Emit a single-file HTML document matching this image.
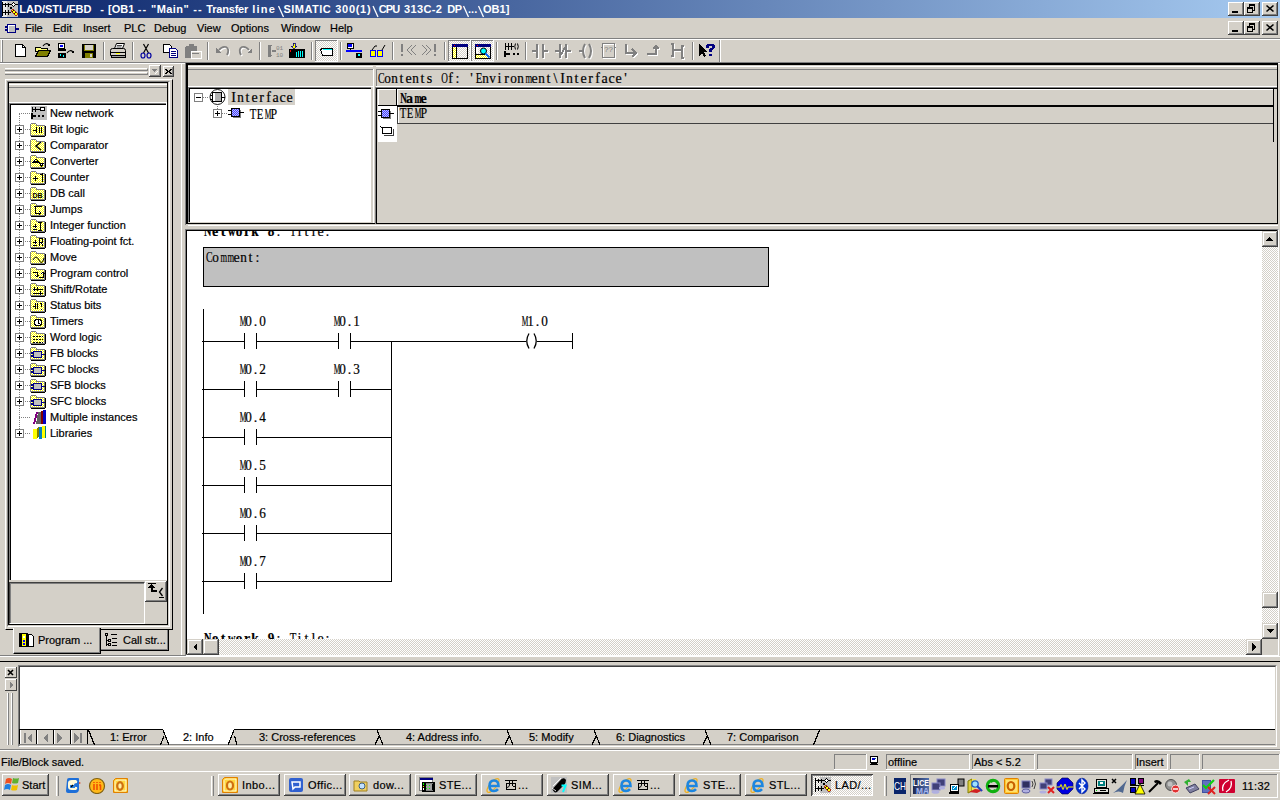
<!DOCTYPE html>
<html><head><meta charset="utf-8">
<style>
*{margin:0;padding:0;box-sizing:border-box}
html,body{width:1280px;height:800px;overflow:hidden;background:#D4D0C8;font-family:"Liberation Sans",sans-serif;font-size:11px;color:#000;-webkit-text-stroke:0.2px #000}
#title{-webkit-text-stroke:0}
.a{position:absolute}
.raised{background:#D4D0C8;box-shadow:inset -1px -1px #404040,inset 1px 1px #D4D0C8,inset -2px -2px #808080,inset 2px 2px #fff}
.sunken{box-shadow:inset -1px -1px #fff,inset 1px 1px #808080,inset -2px -2px #D4D0C8,inset 2px 2px #404040}
.thin{box-shadow:inset -1px -1px #808080,inset 1px 1px #fff}
.thinsunk{box-shadow:inset -1px -1px #fff,inset 1px 1px #808080}
.mono{font-family:"Liberation Serif",serif;font-size:14px}
.mono i{font-style:normal;display:inline-block;width:7px;text-align:center}
.mono b i{width:8px}
.nw{white-space:nowrap}
.sep{position:absolute;top:42px;width:2px;height:18px;border-left:1px solid #808080;border-right:1px solid #fff}
</style></head><body>

<!-- TITLE BAR -->
<div class="a" style="left:0;top:0;width:1280px;height:18px;background:linear-gradient(to right,#0A246A,#A6CAF0)"></div>
<div id="title" class="a nw" style="left:20px;top:2px;color:#fff;font-weight:bold;font-size:11px;line-height:14px;width:500px;height:14px"><span class="a" style="left:-0.7px">LAD/STL/FBD</span><span class="a" style="left:80.3px">-</span><span class="a" style="left:88.05px">[OB1</span><span class="a" style="left:117.7px;letter-spacing:1.2px">--</span><span class="a" style="left:131.0px;letter-spacing:0.45px">&quot;Main&quot;</span><span class="a" style="left:173.2px;letter-spacing:1.2px">--</span><span class="a" style="left:186.3px;letter-spacing:-0.2px">Transfer</span><span class="a" style="left:232.3px;letter-spacing:1.2px">line</span><span class="a" style="left:263.5px;letter-spacing:0.45px">SIMATIC</span><span class="a" style="left:315.3px;letter-spacing:0.7px">300(1)</span><span class="a" style="left:358.7px;letter-spacing:-0.8px">CPU</span><span class="a" style="left:384.05px;letter-spacing:0.35px">313C-2</span><span class="a" style="left:427.3px;letter-spacing:-0.6px">DP</span><span class="a" style="left:448.05px">...</span><span class="a" style="left:463.05px">OB1]</span><svg class="a" style="left:0;top:2px" width="500" height="14"><g stroke="#fff" stroke-width="1.3" fill="none"><path d="M258.5 2L263.5 13" /><path d="M353.0 2L358.0 13" /><path d="M443.5 2L448.5 13" /><path d="M458.5 2L463.5 13" /></g></svg></div>


<!-- title icon -->
<svg class="a" style="left:2px;top:1px" width="16" height="16"><g shape-rendering="crispEdges"><rect x="0" y="0" width="16" height="16" fill="#e8e8e8"/><rect x="5" y="0" width="11" height="16" fill="#c0c0c0"/><path d="M0.5 1v14M3.5 2v4M3.5 9v5M6.5 2v4M6.5 9v5M0.5 3.5h10M0.5 11.5h8" stroke="#000"/><path d="M11.5 1.5l2 2l-2 2l-2-2z" fill="#fff" stroke="#000"/><path d="M13 3.5h3" stroke="#000"/><path d="M7 7l2-1l1 1l-1 2z" fill="#000"/></g><path d="M9 10l2-2l5 5l-2 2z" fill="#ff0" stroke="#a00000" stroke-width="0.8"/><path d="M10 11l2-2M12 13l2-2" stroke="#000" stroke-width="0.9"/></svg>
<!-- title buttons -->
<div class="a" style="left:1228px;top:2px;width:16px;height:14px;background:#D4D0C8;box-shadow:inset -1px -1px #404040,inset 1px 1px #fff,inset -2px -2px #808080"></div>
<div class="a" style="left:1244px;top:2px;width:16px;height:14px;background:#D4D0C8;box-shadow:inset -1px -1px #404040,inset 1px 1px #fff,inset -2px -2px #808080"></div>
<div class="a" style="left:1262px;top:2px;width:16px;height:14px;background:#D4D0C8;box-shadow:inset -1px -1px #404040,inset 1px 1px #fff,inset -2px -2px #808080"></div>
<div class="a" style="left:1228px;top:21px;width:16px;height:14px;background:#D4D0C8;box-shadow:inset -1px -1px #404040,inset 1px 1px #fff,inset -2px -2px #808080"></div>
<div class="a" style="left:1244px;top:21px;width:16px;height:14px;background:#D4D0C8;box-shadow:inset -1px -1px #404040,inset 1px 1px #fff,inset -2px -2px #808080"></div>
<div class="a" style="left:1262px;top:21px;width:16px;height:14px;background:#D4D0C8;box-shadow:inset -1px -1px #404040,inset 1px 1px #fff,inset -2px -2px #808080"></div>
<svg class="a" style="left:1228px;top:2px" width="50" height="33" shape-rendering="crispEdges">
 <g id="wb">
 <rect x="4" y="9" width="6" height="2" fill="#000"/>
 <path d="M21.5 2.5h5v6h-2M21.5 2.5v3" fill="none" stroke="#000"/><rect x="21" y="2" width="6" height="2" fill="#000"/>
 <path d="M19.5 5.5h5v5h-5z" fill="none" stroke="#000"/><rect x="19" y="5" width="6" height="2" fill="#000"/>
 <path d="M38.5 3.5l7 6M45.5 3.5l-7 6" stroke="#000" stroke-width="1.6" shape-rendering="auto"/>
 </g>
 <use href="#wb" y="19"/>
</svg>
<!-- MDI icon -->
<svg class="a" style="left:5px;top:24px" width="15" height="10" shape-rendering="crispEdges">
 <rect x="2" y="0" width="9" height="9" fill="#000080"/><rect x="3" y="1" width="7" height="7" fill="#fff"/><rect x="4" y="2" width="6" height="6" fill="#C0C0C0"/>
 <rect x="0" y="2" width="2" height="2" fill="#000080"/><rect x="0" y="5" width="2" height="2" fill="#000080"/><rect x="11" y="4" width="3" height="2" fill="#000080"/>
</svg>
<!-- MENU BAR -->
<div class="a" style="left:0;top:38px;width:1280px;height:1px;background:#808080"></div>
<div class="a" style="left:0;top:39px;width:1280px;height:1px;background:#fff"></div>
<div id="menu" class="a nw" style="left:0;top:22px;line-height:13px">
<span class="a" style="left:25px">File</span>
<span class="a" style="left:53px">Edit</span>
<span class="a" style="left:83px">Insert</span>
<span class="a" style="left:124px">PLC</span>
<span class="a" style="left:154px">Debug</span>
<span class="a" style="left:197px">View</span>
<span class="a" style="left:231px">Options</span>
<span class="a" style="left:281px">Window</span>
<span class="a" style="left:330px">Help</span>
</div>

<!-- TOOLBAR -->
<div class="a" style="left:0;top:62px;width:1280px;height:1px;background:#808080"></div>
<div class="a" style="left:0;top:63px;width:1280px;height:1px;background:#fff"></div>

<div class="a" style="left:1px;top:40px;width:1px;height:22px;background:#fff"></div>
<div class="a" style="left:2px;top:40px;width:1px;height:22px;background:#808080"></div>
<!-- pressed buttons -->
<div class="a thinsunk" style="left:315px;top:40px;width:23px;height:22px;background-color:#fff;background-image:repeating-conic-gradient(#D4D0C8 0 25%,#fff 0 50%);background-size:2px 2px"></div>
<div class="a thinsunk" style="left:448px;top:40px;width:23px;height:22px;background-color:#fff;background-image:repeating-conic-gradient(#D4D0C8 0 25%,#fff 0 50%);background-size:2px 2px"></div>
<div class="a thinsunk" style="left:471px;top:40px;width:23px;height:22px;background-color:#fff;background-image:repeating-conic-gradient(#D4D0C8 0 25%,#fff 0 50%);background-size:2px 2px"></div>
<div class="sep" style="left:103px"></div>
<div class="sep" style="left:132px"></div>
<div class="sep" style="left:207px"></div>
<div class="sep" style="left:259px"></div>
<div class="sep" style="left:311px"></div>
<div class="sep" style="left:340px"></div>
<div class="sep" style="left:392px"></div>
<div class="sep" style="left:444px"></div>
<div class="sep" style="left:496px"></div>
<div class="sep" style="left:525px"></div>
<div class="sep" style="left:692px"></div>
<div class="a" style="left:719px;top:40px;width:1px;height:22px;background:#808080"></div>
<div class="a" style="left:720px;top:40px;width:1px;height:22px;background:#fff"></div>
<svg class="a" style="left:0;top:38px" width="730" height="26" shape-rendering="crispEdges">
 <!-- new -->
 <path d="M15.5 6.5h7l3 3v9h-10z" fill="#fff" stroke="#000"/><path d="M22.5 6.5v3h3" fill="none" stroke="#000"/>
 <!-- open -->
 <path d="M35.5 9.5h5l1 1h6v3h-12z" fill="#ffff80" stroke="#000"/><path d="M35.5 18.5l3-6h12l-3 6z" fill="#808000" stroke="#000"/>
 <path d="M43 8q3-4 6-1" fill="none" stroke="#000" stroke-width="1.2" shape-rendering="auto"/><path d="M47 8h3v-3z" fill="#000"/>
 <!-- download -->
 <rect x="58.5" y="5.5" width="6" height="5" fill="#fff" stroke="#000"/><rect x="60" y="7" width="3" height="2" fill="#00f"/><rect x="58" y="11" width="8" height="2" fill="#000"/>
 <rect x="58" y="15" width="8" height="5" fill="#000"/><rect x="60" y="16" width="1" height="2" fill="#0ff"/><rect x="63" y="17" width="1" height="2" fill="#0ff"/>
 <path d="M67 15q3-4 6-1" fill="none" stroke="#000" stroke-width="1.2" shape-rendering="auto"/><path d="M71 15h3v-3z" fill="#000"/>
 <!-- save -->
 <rect x="82" y="6" width="14" height="14" fill="#000"/><rect x="84" y="7" width="10" height="6" fill="#808000"/><rect x="85" y="7" width="8" height="5" fill="#D4D0C8"/><rect x="85" y="15" width="8" height="5" fill="#808000"/><rect x="90" y="16" width="2" height="3" fill="#D4D0C8"/>
 <!-- print -->
 <path d="M114.5 10.5l2-5h8l-2 5z" fill="#fff" stroke="#000" shape-rendering="auto"/><path d="M117 7.5h5M116.5 9h5" stroke="#000" stroke-width="0.7" shape-rendering="auto"/><path d="M110.5 12.5q0-2 2-2h11q2 0 2 2v5h-15z" fill="#D4D0C8" stroke="#000" shape-rendering="auto"/><rect x="111" y="14" width="14" height="1" fill="#000"/><rect x="116" y="15" width="4" height="1" fill="#ff0"/><path d="M111.5 17.5h14v2h-14z" fill="#a0a0a0" stroke="#000"/>
 <!-- cut -->
 <path d="M143.5 6l5 9M148.5 6l-5 9" stroke="#000" fill="none" stroke-width="1.2" shape-rendering="auto"/><ellipse cx="143" cy="17.5" rx="2" ry="2.5" fill="none" stroke="#0000a0" stroke-width="1.2" shape-rendering="auto"/><ellipse cx="149" cy="17.5" rx="2" ry="2.5" fill="none" stroke="#0000a0" stroke-width="1.2" shape-rendering="auto"/>
 <!-- copy -->
 <path d="M163.5 6.5h6l2 2v6h-8z" fill="#fff" stroke="#000"/><path d="M169.5 10.5h6l2 2v7h-8z" fill="#fff" stroke="#000080"/><rect x="171" y="13" width="5" height="1" fill="#000080"/><rect x="171" y="15" width="5" height="1" fill="#000080"/><rect x="171" y="17" width="5" height="1" fill="#000080"/>
 <!-- paste disabled -->
 <rect x="185" y="8" width="12" height="12" rx="2" fill="#808080"/><rect x="189" y="6" width="5" height="3" fill="#808080"/><rect x="191" y="13" width="10" height="7" fill="#D4D0C8" stroke="#fff"/><rect x="192" y="15" width="7" height="1" fill="#808080"/>
 <!-- undo/redo disabled -->
 <g transform="translate(1 1)"><path d="M219 12q3-4 7-3q4 2 1 8" fill="none" stroke="#fff" stroke-width="1.8" shape-rendering="auto"/></g><path d="M219 12q3-4 7-3q4 2 1 8" fill="none" stroke="#808080" stroke-width="1.8" shape-rendering="auto"/><path d="M216 10v5h5z" fill="#808080"/>
 <g transform="translate(1 1)"><path d="M249 12q-3-4-7-3q-4 2-1 8" fill="none" stroke="#fff" stroke-width="1.8" shape-rendering="auto"/></g><path d="M249 12q-3-4-7-3q-4 2-1 8" fill="none" stroke="#808080" stroke-width="1.8" shape-rendering="auto"/><path d="M252 10v5h-5z" fill="#808080"/>
 <!-- insert/compare disabled -->
 <path d="M268 7h3v12h-3z" fill="#808080"/><path d="M270 7h2v2M270 17h2v2" fill="#808080"/><rect x="272" y="12" width="4" height="2" fill="#808080"/>
 <text x="276" y="12" font-family="Liberation Mono" font-size="6" fill="#808080">01</text><text x="276" y="19" font-family="Liberation Mono" font-size="6" fill="#808080">10</text>
 <!-- download to PLC -->
 <rect x="289" y="11" width="16" height="9" fill="#000"/><rect x="290" y="12" width="1" height="2" fill="#f00"/><rect x="296" y="14" width="1" height="5" fill="#0ff"/><rect x="298" y="13" width="1" height="6" fill="#0ff"/><rect x="300" y="13" width="1" height="6" fill="#0ff"/><rect x="302" y="13" width="1" height="6" fill="#0ff"/>
 <path d="M293 5h2v3h2l-3 3l-3-3h2z" fill="#ff0" stroke="#000080" stroke-width="0.8"/>
 <!-- tag icon (pressed) -->
 <path d="M320.5 11.5l2 -1h10v7h-10z" fill="#fff" stroke="#000"/><rect x="323" y="11" width="9" height="1" fill="#0ff"/>
 <!-- network -->
 <rect x="347" y="5" width="6" height="5" fill="#fff" stroke="#000"/><rect x="348" y="6" width="4" height="3" fill="#00f"/><rect x="346" y="12" width="16" height="2" fill="#00f"/><rect x="350" y="10" width="1" height="2" fill="#000"/><rect x="356" y="15" width="6" height="5" fill="#000"/><rect x="358" y="16" width="2" height="2" fill="#0ff"/>
 <!-- glasses -->
 <rect x="370.5" y="12.5" width="5" height="6" fill="#ff0" stroke="#00f" rx="1"/><rect x="377.5" y="12.5" width="5" height="6" fill="#ff0" stroke="#00f" rx="1"/><path d="M372 12l3-4h2M382 12l3-5" fill="none" stroke="#000" shape-rendering="auto"/>
 <!-- disabled !<< >>! -->
 <rect x="401" y="6" width="2" height="8" fill="#808080"/><rect x="401" y="16" width="2" height="2" fill="#808080"/>
 <path d="M412 7l-5 5l5 5M416 7l-5 5l5 5" fill="none" stroke="#808080" shape-rendering="auto"/>
 <path d="M422 7l5 5l-5 5M426 7l5 5l-5 5" fill="none" stroke="#808080" shape-rendering="auto"/>
 <rect x="434" y="6" width="2" height="8" fill="#808080"/><rect x="434" y="16" width="2" height="2" fill="#808080"/>
 <!-- window icons pressed -->
 <defs><pattern id="dw" width="2" height="2" patternUnits="userSpaceOnUse"><rect width="2" height="2" fill="#D4D0C8"/><rect width="1" height="1" fill="#fff"/><rect x="1" y="1" width="1" height="1" fill="#fff"/></pattern><pattern id="dy2" width="2" height="2" patternUnits="userSpaceOnUse"><rect width="2" height="2" fill="#ffff00"/><rect width="1" height="1" fill="#fff"/><rect x="1" y="1" width="1" height="1" fill="#fff"/></pattern></defs>
 <rect x="452.5" y="6.5" width="15" height="14" fill="url(#dw)" stroke="#000"/><rect x="452" y="6" width="16" height="3" fill="#000080"/><rect x="454" y="7" width="1" height="1" fill="#f00"/><rect x="453" y="9" width="3" height="11" fill="url(#dy2)"/><rect x="456" y="9" width="1" height="11" fill="#000"/>
 <rect x="475.5" y="6.5" width="15" height="14" fill="url(#dw)" stroke="#000"/><rect x="475" y="6" width="16" height="3" fill="#000080"/><rect x="477" y="7" width="1" height="1" fill="#f00"/><rect x="476" y="9" width="2" height="6" fill="#fff"/><rect x="476" y="17" width="14" height="3" fill="url(#dy2)"/><rect x="476" y="16" width="9" height="1" fill="#000"/><circle cx="483.5" cy="13" r="3" fill="#0ff" stroke="#000" shape-rendering="auto"/><path d="M485.5 15.5l4 4" stroke="#0060ff" stroke-width="1.8" shape-rendering="auto"/>
 <!-- new network -->
 <rect x="505" y="5" width="1" height="7" fill="#000"/><rect x="508" y="5" width="1" height="7" fill="#000"/><rect x="511" y="5" width="1" height="7" fill="#000"/><rect x="505" y="8" width="9" height="1" fill="#000"/><path d="M515.5 5.5q-1.5 3 0 6M517.5 5.5q1.5 3 0 6" stroke="#000" fill="none" shape-rendering="auto"/>
 <rect x="504" y="13" width="2" height="6" fill="#000"/><rect x="504" y="15" width="6" height="2" fill="#000"/><rect x="513" y="15" width="2" height="2" fill="#000"/><rect x="517" y="15" width="2" height="2" fill="#000"/>
 <!-- contact disabled etc -->
 <g transform="translate(1 1)" stroke="#fff" fill="none"><path d="M532 13h5M537 6v14M543 6v14M543 13h5" stroke-width="2"/><path d="M555 13h5M560 6v14M566 6v14M566 13h5M560 18l6-10" stroke-width="2"/><path d="M579 13h4" stroke-width="2"/><path d="M585 6q-4 7 0 14M589 6q4 7 0 14" stroke-width="2" shape-rendering="auto"/><rect x="602.5" y="5.5" width="12" height="14"/></g>
 <g stroke="#808080" fill="none"><path d="M532 13h5M537 6v14M543 6v14M543 13h5" stroke-width="2"/><path d="M555 13h5M560 6v14M566 6v14M566 13h5M560 18l6-10" stroke-width="2"/><path d="M579 13h4" stroke-width="2"/><path d="M585 6q-4 7 0 14M589 6q4 7 0 14" stroke-width="2" shape-rendering="auto"/><rect x="602.5" y="5.5" width="12" height="14"/><path d="M601 9.5h2M614 9.5h2"/></g>
 <text x="604" y="14" font-family="Liberation Sans" font-size="8" fill="#808080">??</text>
 <g transform="translate(1 1)" stroke="#fff" fill="none" stroke-width="2"><path d="M626 6v9h10M632 11l4 4l-4 4"/><path d="M647 16h9v-8M653 11l3-3l3 3"/><path d="M671 6h2v12h-2M673 12h9M684 8h-2v12h2"/></g>
 <g stroke="#808080" fill="none" stroke-width="2"><path d="M626 6v9h10M632 11l4 4l-4 4"/><path d="M647 16h9v-8M653 11l3-3l3 3"/><path d="M671 6h2v12h-2M673 12h9M684 8h-2v12h2"/></g>
 <!-- help -->
 <path d="M699 6v12l3-3l2 4l2-1l-2-4h4z" fill="#000"/><path d="M706 10v-2.5l2-1.5h5l2 1.5v2.5l-2 1.5h-1v2h-3v-2.5l1.5-1.5h1.5v-1.5h-3v1.5z" fill="#000080"/><rect x="709" y="16" width="3" height="2" fill="#000080"/>
</svg>

<!-- LEFT PANEL -->
<!-- dock grip -->
<div class="a" style="left:5px;top:68px;width:143px;height:3px;border-top:1px solid #fff;border-bottom:1px solid #808080;border-right:1px solid #808080"></div>
<div class="a" style="left:5px;top:72px;width:143px;height:3px;border-top:1px solid #fff;border-bottom:1px solid #808080;border-right:1px solid #808080"></div>
<div class="a raised" style="left:149px;top:65px;width:12px;height:12px;box-shadow:inset -1px -1px #404040,inset 1px 1px #fff,inset -2px -2px #808080"></div>
<svg class="a" style="left:149px;top:65px" width="12" height="12" shape-rendering="crispEdges"><path d="M3 4h5v1h-1v1h-1v1h-1v-1h-1v-1h-1z" fill="#808080"/><path d="M6 8h1v-1h1v-1h1v1h-1v1h-1v1h-1z" fill="#fff"/></svg>
<div class="a raised" style="left:163px;top:66px;width:11px;height:11px;box-shadow:inset -1px -1px #404040,inset 1px 1px #fff,inset -2px -2px #808080"></div>
<svg class="a" style="left:163px;top:66px" width="11" height="11" shape-rendering="crispEdges"><path d="M2 3h2v1h1v1h1v-1h1v-1h2v1h-1v1h-1v1h1v1h1v1h-2v-1h-1v-1h-1v1h-1v1h-2v-1h1v-1h1v-1h-1v-1h-1z" fill="#000"/></svg>
<!-- frame -->
<div class="a" style="left:5px;top:79px;width:168px;height:551px;border-left:1px solid #fff;border-top:1px solid #fff;border-right:1px solid #000;border-bottom:1px solid #000"></div>
<div class="a" style="left:7px;top:81px;width:163px;height:546px;border-left:1px solid #808080;border-top:1px solid #808080;border-right:1px solid #fff;border-bottom:1px solid #fff"></div>
<div class="a" style="left:8px;top:82px;width:160px;height:543px;border:1px solid #000"></div>
<!-- header -->
<div class="a" style="left:9px;top:84px;width:158px;height:4px;border-top:1px solid #fff;border-bottom:1px solid #808080"></div>
<div class="a" style="left:9px;top:102px;width:158px;height:1px;background:#fff"></div>
<!-- tree -->
<div class="a" style="left:9px;top:103px;width:158px;height:477px;background:#fff;border-left:1px solid #808080;border-top:1px solid #808080;box-shadow:inset 1px 1px #000"></div>
<div class="a" style="left:166px;top:103px;width:1px;height:477px;background:#fff"></div>
<svg class="a" style="left:0;top:0" width="170" height="450" shape-rendering="crispEdges">
<defs><pattern id="dy" width="2" height="2" patternUnits="userSpaceOnUse"><rect width="2" height="2" fill="#ffff00"/><rect width="1" height="1" fill="#fff"/><rect x="1" y="1" width="1" height="1" fill="#fff"/></pattern></defs>
<path d="M19 114v320" stroke="#808080" stroke-dasharray="1 1"/>
<path d="M19 113h11" stroke="#808080" stroke-dasharray="1 1"/>
<rect x="31" y="106" width="16" height="14" fill="#C0C0C0"/><path d="M32 107v5M35 107v5M32 109h10" stroke="#000"/><rect x="40.5" y="107.5" width="4" height="3" fill="#fff" stroke="#000"/><rect x="31" y="113" width="2" height="6" fill="#000"/><rect x="31" y="115" width="5" height="2" fill="#000"/><rect x="38" y="115" width="2" height="2" fill="#000"/><rect x="42" y="115" width="2" height="2" fill="#000"/>
<path d="M25 129h5" stroke="#808080" stroke-dasharray="1 1"/>
<rect x="15.5" y="125.5" width="8" height="8" fill="#fff" stroke="#808080"/><path d="M17 129.5h5M19.5 127v5" stroke="#000"/>
<g transform="translate(30 121)"><path d="M0.5 14.5v-10l1-2.5h4l1.5 2.5h7v10z" fill="url(#dy)" stroke="#808080"/><path d="M1 15h14M15 5v10" stroke="#000"/><path d="M3 9h3M6 6v6M9 6v6M11 6v6" stroke="#000"/></g>
<path d="M25 145h5" stroke="#808080" stroke-dasharray="1 1"/>
<rect x="15.5" y="141.5" width="8" height="8" fill="#fff" stroke="#808080"/><path d="M17 145.5h5M19.5 143v5" stroke="#000"/>
<g transform="translate(30 137)"><path d="M0.5 14.5v-10l1-2.5h4l1.5 2.5h7v10z" fill="url(#dy)" stroke="#808080"/><path d="M1 15h14M15 5v10" stroke="#000"/><path d="M11 5l-5 4l5 4" stroke="#000" stroke-width="1.5" fill="none" shape-rendering="auto"/></g>
<path d="M25 161h5" stroke="#808080" stroke-dasharray="1 1"/>
<rect x="15.5" y="157.5" width="8" height="8" fill="#fff" stroke="#808080"/><path d="M17 161.5h5M19.5 159v5" stroke="#000"/>
<g transform="translate(30 153)"><path d="M0.5 14.5v-10l1-2.5h4l1.5 2.5h7v10z" fill="url(#dy)" stroke="#808080"/><path d="M1 15h14M15 5v10" stroke="#000"/><path d="M3 9l3-3l3 3z" fill="none" stroke="#000"/><path d="M3 8h6" stroke="#000"/><path d="M9 10h5l-2.5 3z" fill="none" stroke="#000"/></g>
<path d="M25 177h5" stroke="#808080" stroke-dasharray="1 1"/>
<rect x="15.5" y="173.5" width="8" height="8" fill="#fff" stroke="#808080"/><path d="M17 177.5h5M19.5 175v5" stroke="#000"/>
<g transform="translate(30 169)"><path d="M0.5 14.5v-10l1-2.5h4l1.5 2.5h7v10z" fill="url(#dy)" stroke="#808080"/><path d="M1 15h14M15 5v10" stroke="#000"/><path d="M3 9h5M5.5 6.5v5M10 6l2-1v8" stroke="#000" fill="none"/></g>
<path d="M25 193h5" stroke="#808080" stroke-dasharray="1 1"/>
<rect x="15.5" y="189.5" width="8" height="8" fill="#fff" stroke="#808080"/><path d="M17 193.5h5M19.5 191v5" stroke="#000"/>
<g transform="translate(30 185)"><path d="M0.5 14.5v-10l1-2.5h4l1.5 2.5h7v10z" fill="url(#dy)" stroke="#808080"/><path d="M1 15h14M15 5v10" stroke="#000"/><text x="2.5" y="13" font-family="Liberation Sans" font-weight="bold" font-size="7" fill="#000">DB</text></g>
<path d="M25 209h5" stroke="#808080" stroke-dasharray="1 1"/>
<rect x="15.5" y="205.5" width="8" height="8" fill="#fff" stroke="#808080"/><path d="M17 209.5h5M19.5 207v5" stroke="#000"/>
<g transform="translate(30 201)"><path d="M0.5 14.5v-10l1-2.5h4l1.5 2.5h7v10z" fill="url(#dy)" stroke="#808080"/><path d="M1 15h14M15 5v10" stroke="#000"/><path d="M5 6v6h6M9 10l2 2l-2 2" stroke="#000" fill="none"/><rect x="4" y="5" width="8" height="1" fill="#000"/></g>
<path d="M25 225h5" stroke="#808080" stroke-dasharray="1 1"/>
<rect x="15.5" y="221.5" width="8" height="8" fill="#fff" stroke="#808080"/><path d="M17 225.5h5M19.5 223v5" stroke="#000"/>
<g transform="translate(30 217)"><path d="M0.5 14.5v-10l1-2.5h4l1.5 2.5h7v10z" fill="url(#dy)" stroke="#808080"/><path d="M1 15h14M15 5v10" stroke="#000"/><path d="M3 9h4M5 7v4M3 12h4M10 5v8M8 5h4M8 13h4" stroke="#000"/></g>
<path d="M25 241h5" stroke="#808080" stroke-dasharray="1 1"/>
<rect x="15.5" y="237.5" width="8" height="8" fill="#fff" stroke="#808080"/><path d="M17 241.5h5M19.5 239v5" stroke="#000"/>
<g transform="translate(30 233)"><path d="M0.5 14.5v-10l1-2.5h4l1.5 2.5h7v10z" fill="url(#dy)" stroke="#808080"/><path d="M1 15h14M15 5v10" stroke="#000"/><path d="M3 9h4M5 7v4M3 12h4M9 5v8M9 5h3v4h-3M11 9l2 4" stroke="#000" fill="none"/></g>
<path d="M25 257h5" stroke="#808080" stroke-dasharray="1 1"/>
<rect x="15.5" y="253.5" width="8" height="8" fill="#fff" stroke="#808080"/><path d="M17 257.5h5M19.5 255v5" stroke="#000"/>
<g transform="translate(30 249)"><path d="M0.5 14.5v-10l1-2.5h4l1.5 2.5h7v10z" fill="url(#dy)" stroke="#808080"/><path d="M1 15h14M15 5v10" stroke="#000"/><path d="M3 11q3-6 6 0t5-2" stroke="#000" fill="none" shape-rendering="auto"/></g>
<path d="M25 273h5" stroke="#808080" stroke-dasharray="1 1"/>
<rect x="15.5" y="269.5" width="8" height="8" fill="#fff" stroke="#808080"/><path d="M17 273.5h5M19.5 271v5" stroke="#000"/>
<g transform="translate(30 265)"><path d="M0.5 14.5v-10l1-2.5h4l1.5 2.5h7v10z" fill="url(#dy)" stroke="#808080"/><path d="M1 15h14M15 5v10" stroke="#000"/><path d="M3 7h4v5M9 12h4v-5M5 10l2 2l2-2M11 9l2-2l2 2" stroke="#000" fill="none"/></g>
<path d="M25 289h5" stroke="#808080" stroke-dasharray="1 1"/>
<rect x="15.5" y="285.5" width="8" height="8" fill="#fff" stroke="#808080"/><path d="M17 289.5h5M19.5 287v5" stroke="#000"/>
<g transform="translate(30 281)"><path d="M0.5 14.5v-10l1-2.5h4l1.5 2.5h7v10z" fill="url(#dy)" stroke="#808080"/><path d="M1 15h14M15 5v10" stroke="#000"/><path d="M3 8h10M3 12h10M4 6v4M7 6v4M10 10v4" stroke="#000"/></g>
<path d="M25 305h5" stroke="#808080" stroke-dasharray="1 1"/>
<rect x="15.5" y="301.5" width="8" height="8" fill="#fff" stroke="#808080"/><path d="M17 305.5h5M19.5 303v5" stroke="#000"/>
<g transform="translate(30 297)"><path d="M0.5 14.5v-10l1-2.5h4l1.5 2.5h7v10z" fill="url(#dy)" stroke="#808080"/><path d="M1 15h14M15 5v10" stroke="#000"/><path d="M3 9h2M5 6v6M7 6v6M10 6q3 0 1 3v1M11 12v1" stroke="#000" fill="none"/></g>
<path d="M25 321h5" stroke="#808080" stroke-dasharray="1 1"/>
<rect x="15.5" y="317.5" width="8" height="8" fill="#fff" stroke="#808080"/><path d="M17 321.5h5M19.5 319v5" stroke="#000"/>
<g transform="translate(30 313)"><path d="M0.5 14.5v-10l1-2.5h4l1.5 2.5h7v10z" fill="url(#dy)" stroke="#808080"/><path d="M1 15h14M15 5v10" stroke="#000"/><circle cx="8" cy="9.5" r="3.5" fill="#fff" stroke="#000"/><path d="M8 7v3h2" stroke="#000" fill="none"/></g>
<path d="M25 337h5" stroke="#808080" stroke-dasharray="1 1"/>
<rect x="15.5" y="333.5" width="8" height="8" fill="#fff" stroke="#808080"/><path d="M17 337.5h5M19.5 335v5" stroke="#000"/>
<g transform="translate(30 329)"><path d="M0.5 14.5v-10l1-2.5h4l1.5 2.5h7v10z" fill="url(#dy)" stroke="#808080"/><path d="M1 15h14M15 5v10" stroke="#000"/><path d="M3 7h10M3 10h10M3 13h10" stroke="#000" stroke-dasharray="2 1"/></g>
<path d="M25 353h5" stroke="#808080" stroke-dasharray="1 1"/>
<rect x="15.5" y="349.5" width="8" height="8" fill="#fff" stroke="#808080"/><path d="M17 353.5h5M19.5 351v5" stroke="#000"/>
<g transform="translate(30 345)"><path d="M0.5 14.5v-10l1-2.5h4l1.5 2.5h7v10z" fill="url(#dy)" stroke="#808080"/><path d="M1 15h14M15 5v10" stroke="#000"/><rect x="3.5" y="6.5" width="8" height="6" fill="#c0c0c0" stroke="#000080" stroke-width="1.5"/><path d="M1 8h2M1 11h2M12 9.5h3" stroke="#000080" stroke-width="1.5"/></g>
<path d="M25 369h5" stroke="#808080" stroke-dasharray="1 1"/>
<rect x="15.5" y="365.5" width="8" height="8" fill="#fff" stroke="#808080"/><path d="M17 369.5h5M19.5 367v5" stroke="#000"/>
<g transform="translate(30 361)"><path d="M0.5 14.5v-10l1-2.5h4l1.5 2.5h7v10z" fill="url(#dy)" stroke="#808080"/><path d="M1 15h14M15 5v10" stroke="#000"/><rect x="3.5" y="6.5" width="8" height="6" fill="#c0c0c0" stroke="#000080" stroke-width="1.5"/><path d="M1 8h2M1 11h2M12 9.5h3" stroke="#000080" stroke-width="1.5"/></g>
<path d="M25 385h5" stroke="#808080" stroke-dasharray="1 1"/>
<rect x="15.5" y="381.5" width="8" height="8" fill="#fff" stroke="#808080"/><path d="M17 385.5h5M19.5 383v5" stroke="#000"/>
<g transform="translate(30 377)"><path d="M0.5 14.5v-10l1-2.5h4l1.5 2.5h7v10z" fill="url(#dy)" stroke="#808080"/><path d="M1 15h14M15 5v10" stroke="#000"/><rect x="3.5" y="6.5" width="8" height="6" fill="#c0c0c0" stroke="#000080" stroke-width="1.5"/><path d="M1 8h2M1 11h2M12 9.5h3" stroke="#000080" stroke-width="1.5"/></g>
<path d="M25 401h5" stroke="#808080" stroke-dasharray="1 1"/>
<rect x="15.5" y="397.5" width="8" height="8" fill="#fff" stroke="#808080"/><path d="M17 401.5h5M19.5 399v5" stroke="#000"/>
<g transform="translate(30 393)"><path d="M0.5 14.5v-10l1-2.5h4l1.5 2.5h7v10z" fill="url(#dy)" stroke="#808080"/><path d="M1 15h14M15 5v10" stroke="#000"/><rect x="3.5" y="6.5" width="8" height="6" fill="#c0c0c0" stroke="#000080" stroke-width="1.5"/><path d="M1 8h2M1 11h2M12 9.5h3" stroke="#000080" stroke-width="1.5"/></g>
<path d="M19 417h11" stroke="#808080" stroke-dasharray="1 1"/>
<path d="M33 424l3-12h2l-3 12z" fill="#800080"/><path d="M36 424l2-12h3v12z" fill="#606060"/><rect x="41" y="411" width="2" height="13" fill="#800000"/><rect x="43" y="410" width="3" height="14" fill="#0000C0"/>
<path d="M25 433h5" stroke="#808080" stroke-dasharray="1 1"/>
<rect x="15.5" y="429.5" width="8" height="8" fill="#fff" stroke="#808080"/><path d="M17 433.5h5M19.5 431v5" stroke="#000"/>
<rect x="33" y="429" width="4" height="10" fill="#ff0"/><path d="M37 439v-10l2-3v10z" fill="#808000"/><rect x="39" y="427" width="3" height="12" fill="#0080c0"/><rect x="42" y="426" width="3" height="12" fill="#ff0"/><path d="M45 438v-12l1 1v12z" fill="#008080"/>
</svg>
<div class="a nw" style="left:50px;top:107px;line-height:13px">New network</div>
<div class="a nw" style="left:50px;top:123px;line-height:13px">Bit logic</div>
<div class="a nw" style="left:50px;top:139px;line-height:13px">Comparator</div>
<div class="a nw" style="left:50px;top:155px;line-height:13px">Converter</div>
<div class="a nw" style="left:50px;top:171px;line-height:13px">Counter</div>
<div class="a nw" style="left:50px;top:187px;line-height:13px">DB call</div>
<div class="a nw" style="left:50px;top:203px;line-height:13px">Jumps</div>
<div class="a nw" style="left:50px;top:219px;line-height:13px">Integer function</div>
<div class="a nw" style="left:50px;top:235px;line-height:13px">Floating-point fct.</div>
<div class="a nw" style="left:50px;top:251px;line-height:13px">Move</div>
<div class="a nw" style="left:50px;top:267px;line-height:13px">Program control</div>
<div class="a nw" style="left:50px;top:283px;line-height:13px">Shift/Rotate</div>
<div class="a nw" style="left:50px;top:299px;line-height:13px">Status bits</div>
<div class="a nw" style="left:50px;top:315px;line-height:13px">Timers</div>
<div class="a nw" style="left:50px;top:331px;line-height:13px">Word logic</div>
<div class="a nw" style="left:50px;top:347px;line-height:13px">FB blocks</div>
<div class="a nw" style="left:50px;top:363px;line-height:13px">FC blocks</div>
<div class="a nw" style="left:50px;top:379px;line-height:13px">SFB blocks</div>
<div class="a nw" style="left:50px;top:395px;line-height:13px">SFC blocks</div>
<div class="a nw" style="left:50px;top:411px;line-height:13px">Multiple instances</div>
<div class="a nw" style="left:50px;top:427px;line-height:13px">Libraries</div>
<!-- description box -->
<div class="a" style="left:9px;top:582px;width:136px;height:42px;border-left:1px solid #404040;border-top:1px solid #404040;border-right:1px solid #fff;border-bottom:1px solid #fff;box-shadow:inset 1px 1px #808080"></div>
<div class="a" style="left:145px;top:581px;width:22px;height:21px;box-shadow:inset -1px -1px #404040,inset 1px 1px #fff,inset -2px -2px #808080"></div>
<svg class="a" style="left:146px;top:581px" width="21" height="21" shape-rendering="crispEdges"><rect x="2" y="2" width="8" height="1" fill="#000"/><path d="M2 6.5l3.5-3.5l3.5 3.5z" fill="#000"/><rect x="5" y="6" width="2" height="5" fill="#000"/><rect x="5" y="9" width="6" height="2" fill="#000"/><path d="M16.5 7l-3 4l3 4" stroke="#000" stroke-width="1.3" fill="none" shape-rendering="auto"/><rect x="13" y="16" width="5" height="1" fill="#000"/></svg>
<!-- tabs -->

<div class="a" style="left:13px;top:628px;width:88px;height:26px;background:#D4D0C8;border-left:1px solid #fff;border-bottom:1px solid #000;border-right:1px solid #000;box-shadow:inset -1px -1px #808080"></div>
<div class="a" style="left:101px;top:630px;width:68px;height:21px;background:#D4D0C8;border-bottom:1px solid #000;border-right:1px solid #000;box-shadow:inset -1px -1px #808080"></div>
<svg class="a" style="left:18px;top:632px" width="16" height="16" shape-rendering="crispEdges"><rect x="1" y="1" width="9" height="14" fill="#000"/><rect x="4" y="2" width="4" height="12" fill="#ff0"/><rect x="5" y="4" width="2" height="2" fill="#fff"/><rect x="5" y="8" width="2" height="2" fill="#00f"/><rect x="5" y="11" width="2" height="2" fill="#00f"/><path d="M10.5 2.5h3l2 2v10h-5z" fill="#fff" stroke="#000"/></svg>
<div class="a nw" style="left:38px;top:634px;line-height:13px">Program ...</div>
<svg class="a" style="left:104px;top:632px" width="16" height="16" shape-rendering="crispEdges"><rect x="1.5" y="1.5" width="2" height="2" fill="none" stroke="#000"/><path d="M2.5 4v10M2.5 8.5h2M2.5 12.5h2M7 2.5h6M8 6.5h5M8 10.5h5M8 13.5h5" stroke="#000"/><rect x="4.5" y="7.5" width="2" height="2" fill="none" stroke="#000"/><rect x="4.5" y="11.5" width="2" height="2" fill="none" stroke="#000"/></svg>
<div class="a nw" style="left:123px;top:634px;line-height:13px">Call str...</div>


<!-- RIGHT TOP (interface) -->
<div class="a" style="left:185px;top:62px;width:1093px;height:163px;border-left:1px solid #808080;"></div>
<div class="a" style="left:186px;top:63px;width:1092px;height:161px;border-left:2px solid #000;border-top:2px solid #000;border-right:1px solid #000"></div>

<!-- left tree header -->
<div class="a" style="left:188px;top:66px;width:185px;height:4px;border-top:1px solid #fff;border-bottom:1px solid #808080"></div>
<div class="a" style="left:188px;top:86px;width:185px;height:1px;background:#fff"></div>
<div class="a" style="left:188px;top:87px;width:183px;height:137px;background:#fff;border-left:1px solid #808080;border-top:1px solid #808080;box-shadow:inset 1px 1px #000"></div>
<div class="a" style="left:188px;top:222px;width:185px;height:1px;background:#D4D0C8"></div>
<div class="a" style="left:188px;top:223px;width:1090px;height:1px;background:#000"></div>
<div class="a" style="left:371px;top:87px;width:1px;height:136px;background:#D4D0C8"></div>
<div class="a" style="left:373px;top:69px;width:1px;height:154px;background:#fff"></div>
<!-- tree items -->
<div class="a" style="left:228px;top:89px;width:67px;height:16px;background:#D4D0C8"></div>
<svg class="a" style="left:188px;top:86px" width="110" height="40" shape-rendering="crispEdges">
 <rect x="6.5" y="7.5" width="8" height="8" fill="#fff" stroke="#808080"/><path d="M8 11.5h5" stroke="#000"/>
 <path d="M15 11.5h5M29.5 20v4M34 27.5h6" stroke="#808080" stroke-dasharray="1 1"/>
 <circle cx="29.5" cy="11" r="7.5" fill="none" stroke="#000" stroke-width="0.9" shape-rendering="auto"/>
 <rect x="24.5" y="6.5" width="9" height="9" fill="#b0b0b0" stroke="#000"/><rect x="25" y="7" width="2" height="8" fill="#fff"/><path d="M22 9h2M22 13h2M34 11h3" stroke="#000"/>
 <rect x="25.5" y="23.5" width="8" height="8" fill="#fff" stroke="#808080"/><path d="M27 27.5h5M29.5 25v5" stroke="#000"/>
 <path d="M45 31.5h7.5v-8" stroke="#808080" fill="none"/><defs><pattern id="db" width="2" height="2" patternUnits="userSpaceOnUse"><rect width="2" height="2" fill="#4040ff"/><rect width="1" height="1" fill="#c0c0ff"/><rect x="1" y="1" width="1" height="1" fill="#c0c0ff"/></pattern></defs><rect x="43.5" y="22.5" width="8" height="8" fill="url(#db)" stroke="#000"/><path d="M40 24.5h3M40 28.5h3M52 26.5h4" stroke="#000"/>
</svg>
<div class="a mono nw" style="left:230px;top:90px;line-height:16px"><i>I</i><i style="transform:scaleX(0.943)">n</i><i>t</i><i>e</i><i>r</i><i>f</i><i>a</i><i>c</i><i>e</i></div>
<div class="a mono nw" style="left:249px;top:107px;line-height:16px"><i style="transform:scaleX(0.772)">T</i><i style="transform:scaleX(0.772)">E</i><i style="transform:scaleX(0.53)">M</i><i style="transform:scaleX(0.848)">P</i></div>
<!-- right: contents -->
<div class="a" style="left:376px;top:66px;width:901px;height:4px;border-top:1px solid #fff;border-bottom:1px solid #808080"></div>
<div class="a" style="left:376px;top:69px;width:1px;height:17px;background:#808080"></div>
<div class="a mono nw" style="left:377px;top:71px;line-height:16px"><i style="transform:scaleX(0.706)">C</i><i style="transform:scaleX(0.943)">o</i><i style="transform:scaleX(0.943)">n</i><i>t</i><i>e</i><i style="transform:scaleX(0.943)">n</i><i>t</i><i>s</i><i>&nbsp;</i><i style="transform:scaleX(0.653)">O</i><i>f</i><i>:</i><i>&nbsp;</i><i>'</i><i style="transform:scaleX(0.772)">E</i><i style="transform:scaleX(0.943)">n</i><i style="transform:scaleX(0.943)">v</i><i>i</i><i>r</i><i style="transform:scaleX(0.943)">o</i><i style="transform:scaleX(0.943)">n</i><i style="transform:scaleX(0.606)">m</i><i>e</i><i style="transform:scaleX(0.943)">n</i><i>t</i><i>\</i><i>I</i><i style="transform:scaleX(0.943)">n</i><i>t</i><i>e</i><i>r</i><i>f</i><i>a</i><i>c</i><i>e</i><i>'</i></div>
<div class="a" style="left:376px;top:86px;width:901px;height:1px;background:#fff"></div>
<div class="a" style="left:375px;top:87px;width:902px;height:137px;border-left:1px solid #808080;border-top:1px solid #808080;box-shadow:inset 1px 1px #000"></div>
<div class="a" style="left:188px;top:225px;width:1090px;height:1px;background:#fff"></div>
<div class="a" style="left:378px;top:89px;width:19px;height:17px;border-right:1px solid #000;border-bottom:1px solid #000;box-shadow:inset 1px 1px #fff"></div>
<div class="a" style="left:397px;top:89px;width:877px;height:17px;border-right:1px solid #000;border-bottom:1px solid #000;box-shadow:inset 1px 1px #fff"></div>
<div class="a" style="left:378px;top:106px;width:19px;height:36px;background:#fff"></div>
<div class="a" style="left:397px;top:106px;width:877px;height:18px;border:1px solid #404040;border-top:0;box-shadow:inset 1px 0 #fff"></div>
<div class="a" style="left:1273px;top:89px;width:1px;height:53px;background:#000"></div>
<div class="a" style="left:397px;top:106px;width:876px;height:1px;background:#000"></div>
<div class="a mono nw" style="left:399px;top:91px;line-height:16px;font-weight:bold"><i style="transform:scaleX(0.653)">N</i><i>a</i><i style="transform:scaleX(0.606)">m</i><i>e</i></div>
<div class="a mono nw" style="left:399px;top:106px;line-height:16px"><i style="transform:scaleX(0.772)">T</i><i style="transform:scaleX(0.772)">E</i><i style="transform:scaleX(0.53)">M</i><i style="transform:scaleX(0.848)">P</i></div>
<svg class="a" style="left:376px;top:104px" width="22" height="36" shape-rendering="crispEdges">
 <path d="M7 14.5h7.5v-8" stroke="#808080" fill="none"/><rect x="5.5" y="5.5" width="8" height="8" fill="url(#db)" stroke="#000"/><path d="M2 7.5h3M2 11.5h3M14 9.5h4" stroke="#000"/>
 <path d="M4 22l2 2" stroke="#000"/><rect x="6.5" y="23.5" width="9" height="6" fill="#fff" stroke="#000"/><path d="M8 31h9v-6" stroke="#404040" fill="none"/>
</svg>


<!-- CODE AREA -->
<div class="a" style="left:185px;top:229px;width:1094px;height:427px;border-left:1px solid #808080;border-top:1px solid #808080;border-right:1px solid #fff;border-bottom:1px solid #fff"></div>
<div class="a" style="left:186px;top:230px;width:1092px;height:425px;background:#fff;border-left:1px solid #000;border-top:1px solid #000;border-right:1px solid #D4D0C8;border-bottom:1px solid #D4D0C8;overflow:hidden">
 <div class="a mono nw" style="left:16px;top:-7px;line-height:16px"><b><i style="transform:scaleX(0.732)">N</i><i>e</i><i>t</i><i style="transform:scaleX(0.732)">w</i><i style="transform:scaleX(0.943)">o</i><i>r</i><i style="transform:scaleX(0.951)">k</i><i>&nbsp;</i><i style="transform:scaleX(0.943)">8</i></b><i>:</i><i>&nbsp;</i><i style="transform:scaleX(0.772)">T</i><i>i</i><i>t</i><i>l</i><i>e</i><i>:</i></div>
 <div class="a" style="left:16px;top:16px;width:566px;height:40px;background:#C0C0C0;border:1px solid #000"></div>
 <div class="a mono nw" style="left:18px;top:19px;line-height:16px"><i style="transform:scaleX(0.706)">C</i><i style="transform:scaleX(0.943)">o</i><i style="transform:scaleX(0.606)">m</i><i style="transform:scaleX(0.606)">m</i><i>e</i><i style="transform:scaleX(0.943)">n</i><i>t</i><i>:</i></div>
 <div class="a mono nw" style="left:16px;top:400px;line-height:16px"><b><i style="transform:scaleX(0.732)">N</i><i>e</i><i>t</i><i style="transform:scaleX(0.732)">w</i><i style="transform:scaleX(0.943)">o</i><i>r</i><i style="transform:scaleX(0.951)">k</i><i>&nbsp;</i><i style="transform:scaleX(0.943)">9</i></b><i>:</i><i>&nbsp;</i><i style="transform:scaleX(0.772)">T</i><i>i</i><i>t</i><i>l</i><i>e</i><i>:</i></div>
</div>
<!-- ladder -->
<svg class="a" style="left:0;top:0" width="600" height="640" shape-rendering="crispEdges">
 <path d="M203.5 309v305" stroke="#000"/>
 <path d="M391.5 341v240" stroke="#000"/>
 <path d="M202 341.5h43M256 341.5h83M350 341.5h176M537 341.5h36M572.5 333v16" stroke="#000"/>
 <path d="M529 333.5q-4.5 7.5 0 15M534 333.5q4.5 7.5 0 15" stroke="#000" stroke-width="1.3" fill="none" shape-rendering="auto"/>
 <path d="M244.5 333v16M256.5 333v16M338.5 333v16M350.5 333v16" stroke="#000"/>
 <path d="M202 389.5h43M256 389.5h83M350 389.5h42M244.5 381v16M256.5 381v16M338.5 381v16M350.5 381v16" stroke="#000"/>
 <path d="M202 437.5h43M256 437.5h136M244.5 429v16M256.5 429v16" stroke="#000"/>
 <path d="M202 485.5h43M256 485.5h136M244.5 477v16M256.5 477v16" stroke="#000"/>
 <path d="M202 533.5h43M256 533.5h136M244.5 525v16M256.5 525v16" stroke="#000"/>
 <path d="M202 581.5h43M256 581.5h136M244.5 573v16M256.5 573v16" stroke="#000"/>
</svg>
<div class="a mono nw" style="left:238px;top:314px;line-height:16px"><i style="transform:scaleX(0.53)">M</i><i style="transform:scaleX(0.943)">0</i><i>.</i><i style="transform:scaleX(0.943)">0</i></div>
<div class="a mono nw" style="left:332px;top:314px;line-height:16px"><i style="transform:scaleX(0.53)">M</i><i style="transform:scaleX(0.943)">0</i><i>.</i><i style="transform:scaleX(0.943)">1</i></div>
<div class="a mono nw" style="left:520px;top:314px;line-height:16px"><i style="transform:scaleX(0.53)">M</i><i style="transform:scaleX(0.943)">1</i><i>.</i><i style="transform:scaleX(0.943)">0</i></div>
<div class="a mono nw" style="left:238px;top:362px;line-height:16px"><i style="transform:scaleX(0.53)">M</i><i style="transform:scaleX(0.943)">0</i><i>.</i><i style="transform:scaleX(0.943)">2</i></div>
<div class="a mono nw" style="left:332px;top:362px;line-height:16px"><i style="transform:scaleX(0.53)">M</i><i style="transform:scaleX(0.943)">0</i><i>.</i><i style="transform:scaleX(0.943)">3</i></div>
<div class="a mono nw" style="left:238px;top:410px;line-height:16px"><i style="transform:scaleX(0.53)">M</i><i style="transform:scaleX(0.943)">0</i><i>.</i><i style="transform:scaleX(0.943)">4</i></div>
<div class="a mono nw" style="left:238px;top:458px;line-height:16px"><i style="transform:scaleX(0.53)">M</i><i style="transform:scaleX(0.943)">0</i><i>.</i><i style="transform:scaleX(0.943)">5</i></div>
<div class="a mono nw" style="left:238px;top:506px;line-height:16px"><i style="transform:scaleX(0.53)">M</i><i style="transform:scaleX(0.943)">0</i><i>.</i><i style="transform:scaleX(0.943)">6</i></div>
<div class="a mono nw" style="left:238px;top:554px;line-height:16px"><i style="transform:scaleX(0.53)">M</i><i style="transform:scaleX(0.943)">0</i><i>.</i><i style="transform:scaleX(0.943)">7</i></div>
<!-- v scrollbar -->
<div class="a" style="left:1262px;top:231px;width:16px;height:408px;background-color:#fff;background-image:repeating-conic-gradient(#D4D0C8 0 25%,#fff 0 50%);background-size:2px 2px"></div>
<div class="a raised" style="left:1262px;top:231px;width:16px;height:16px"></div>
<svg class="a" style="left:1262px;top:231px" width="16" height="16" shape-rendering="crispEdges"><path d="M4 10h7l-3.5-4z" fill="#000"/></svg>
<div class="a raised" style="left:1262px;top:592px;width:16px;height:16px"></div>
<div class="a raised" style="left:1262px;top:623px;width:16px;height:16px"></div>
<svg class="a" style="left:1262px;top:623px" width="16" height="16" shape-rendering="crispEdges"><path d="M4 6h8l-4 4z" fill="#000"/></svg>
<!-- h scrollbar -->
<div class="a" style="left:187px;top:639px;width:1075px;height:16px;background-color:#fff;background-image:repeating-conic-gradient(#D4D0C8 0 25%,#fff 0 50%);background-size:2px 2px"></div>
<div class="a raised" style="left:187px;top:639px;width:16px;height:16px"></div>
<svg class="a" style="left:187px;top:639px" width="16" height="16" shape-rendering="crispEdges"><path d="M10 4v8l-4-4z" fill="#000"/></svg>
<div class="a raised" style="left:203px;top:639px;width:16px;height:16px"></div>
<div class="a raised" style="left:1246px;top:639px;width:16px;height:16px"></div>
<svg class="a" style="left:1246px;top:639px" width="16" height="16" shape-rendering="crispEdges"><path d="M6 4v8l4-4z" fill="#000"/></svg>
<div class="a" style="left:1262px;top:639px;width:16px;height:16px;background:#D4D0C8"></div>


<!-- OUTPUT PANEL -->
<div class="a" style="left:0;top:655px;width:186px;height:1px;background:#808080"></div>
<div class="a" style="left:0;top:656px;width:1280px;height:1px;background:#fff"></div>
<div class="a" style="left:0;top:661px;width:1280px;height:1px;background:#000"></div>
<div class="a" style="left:181px;top:64px;width:1px;height:591px;background:#fff"></div>
<!-- output panel side buttons -->
<div class="a" style="left:5px;top:667px;width:12px;height:11px;box-shadow:inset -1px -1px #404040,inset 1px 1px #fff"></div>
<svg class="a" style="left:5px;top:667px" width="12" height="11"><path d="M3 3l5 5M8 3l-5 5" stroke="#000" stroke-width="1.6"/></svg>
<div class="a" style="left:5px;top:679px;width:12px;height:12px;box-shadow:inset -1px -1px #404040,inset 1px 1px #fff"></div>
<svg class="a" style="left:5px;top:679px" width="12" height="12" shape-rendering="crispEdges"><path d="M5 3v6l3-3z" fill="#808080"/></svg>
<div class="a" style="left:7px;top:693px;width:2px;height:52px;border-left:1px solid #fff;border-right:1px solid #808080"></div>
<div class="a" style="left:11px;top:693px;width:2px;height:52px;border-left:1px solid #fff;border-right:1px solid #808080"></div>
<!-- output box -->
<div class="a" style="left:18px;top:665px;width:1259px;height:82px;border-left:1px solid #808080;border-top:1px solid #808080;border-bottom:1px solid #fff;border-right:1px solid #fff"></div>
<div class="a" style="left:19px;top:666px;width:1257px;height:80px;background:#fff;border-left:1px solid #404040;border-top:1px solid #404040;border-right:1px solid #D4D0C8;border-bottom:1px solid #D4D0C8"></div>
<div class="a" style="left:19px;top:729px;width:1256px;height:16px;background:#D4D0C8;border-top:1px solid #000"></div>
<svg class="a" style="left:0;top:720px" width="1280" height="30" shape-rendering="crispEdges">
 <!-- nav buttons -->
 <g stroke="#000"><path d="M19.5 10v15M36.5 10v15M53.5 10v15M70.5 10v15M87.5 10v15"/></g>
 <g fill="#808080"><rect x="24" y="13" width="2" height="10"/><path d="M32 13v10l-5-5z"/><path d="M48 13v10l-5-5z"/><path d="M57 13v10l5-5z"/><path d="M74 13v10l5-5z"/><rect x="80" y="13" width="2" height="10"/></g>
 <g stroke="#fff"><path d="M20.5 10v15M37.5 10v15M54.5 10v15M71.5 10v15"/></g>
 <path d="M19 24.5h69" stroke="#808080"/>
 <!-- active tab white -->
 <path d="M19 9.5h69M88 9.5h75M234 9.5h586" stroke="#000" shape-rendering="crispEdges"/>
 <path d="M88 24.5h1187" stroke="#808080" shape-rendering="crispEdges"/>
 <path d="M163 9L234 9L228 24L169 24z" fill="#fff"/>
 <path d="M163 9h71" stroke="#fff" shape-rendering="crispEdges"/>
 <path d="M169 24.5h59" stroke="#808080" shape-rendering="crispEdges"/>
 <path d="M88.5 10L94.5 25M163 10L169 25M164 16L160.5 25M234 10L228 25M234.5 16L237 25M377 10L383 25M379 16L375 25M507 10L513 25M509 16L505 25M594 10L600 25M596 16L592 25M705 10L711 25M707 16L703 25M819.5 10L813.5 25" fill="none" stroke="#000" stroke-width="1.2"/>
</svg>
<div class="a nw" style="left:110px;top:731px;line-height:13px">1: Error</div>
<div class="a nw" style="left:183px;top:731px;line-height:13px">2: Info</div>
<div class="a nw" style="left:259px;top:731px;line-height:13px">3: Cross-references</div>
<div class="a nw" style="left:406px;top:731px;line-height:13px">4: Address info.</div>
<div class="a nw" style="left:529px;top:731px;line-height:13px">5: Modify</div>
<div class="a nw" style="left:616px;top:731px;line-height:13px">6: Diagnostics</div>
<div class="a nw" style="left:727px;top:731px;line-height:13px">7: Comparison</div>


<!-- STATUS BAR -->
<div class="a" style="left:0;top:749px;width:1280px;height:1px;background:#808080"></div>
<div class="a" style="left:0;top:750px;width:1280px;height:1px;background:#fff"></div>
<div class="a nw" style="left:1px;top:756px;line-height:13px">File/Block saved.</div>
<div class="a thinsunk" style="left:834px;top:754px;width:33px;height:16px"></div>
<svg class="a" style="left:870px;top:756px" width="9" height="10" shape-rendering="crispEdges"><rect x="0.5" y="0.5" width="7" height="6" fill="#fff" stroke="#000"/><rect x="2" y="2" width="3" height="2" fill="#0000c0"/><rect x="5" y="2" width="1" height="1" fill="#008080"/><rect x="1" y="7" width="6" height="1" fill="#000"/><rect x="0" y="8" width="8" height="1" fill="#000"/></svg>
<div class="a thinsunk" style="left:886px;top:754px;width:84px;height:16px"></div>
<div class="a nw" style="left:888px;top:756px;line-height:13px">offline</div>
<div class="a thinsunk" style="left:972px;top:754px;width:63px;height:16px"></div>
<div class="a nw" style="left:974px;top:756px;line-height:13px">Abs &lt; 5.2</div>
<div class="a thinsunk" style="left:1037px;top:754px;width:96px;height:16px"></div>
<div class="a thinsunk" style="left:1135px;top:754px;width:33px;height:16px"></div>
<div class="a nw" style="left:1136px;top:756px;line-height:13px">Insert</div>
<div class="a thinsunk" style="left:1170px;top:754px;width:30px;height:16px"></div>
<div class="a thinsunk" style="left:1202px;top:754px;width:78px;height:16px"></div>


<!-- TASKBAR -->
<div class="a" style="left:0;top:771px;width:1280px;height:1px;background:#fff"></div>
<div class="a" style="left:2px;top:774px;width:47px;height:22px;box-shadow:inset -1px -1px #404040,inset 1px 1px #fff,inset -2px -2px #808080"></div>
<svg class="a" style="left:4px;top:777px" width="16" height="15" shape-rendering="auto"><path d="M2 2q3-2 6 0l-1 5q-3-2-6 0z" fill="#f05020"/><path d="M9 1q3 1 6 0l-1 5q-3 1-6 0z" fill="#60b030"/><path d="M1 8q3-2 6 0l-1 5q-3-2-6 0z" fill="#2080e0"/><path d="M8 8q3 1 6 0l-1 5q-3 1-6 0z" fill="#f0c000"/></svg>
<div class="a nw" style="left:22px;top:779px;line-height:13px">Start</div>
<div class="a" style="left:56px;top:776px;width:3px;height:20px;border-left:1px solid #fff;border-right:1px solid #808080"></div>
<svg class="a" style="left:64px;top:777px" width="68" height="17" shape-rendering="auto">
 <path d="M3 3q0-2 2-2h9q1 0 1 1v10q0 4-4 4h-7q-2 0-2-2z" fill="#1e6fd8"/><path d="M4 6q0-3 4-3h4q2 1 1 3q-3 0-3 2q0 2 3 2q1 2-1 3h-4q-4 0-4-3z" fill="#fff8d8"/><path d="M6 8h5v3h-5z" fill="#2a80e0"/><path d="M7 10l2-2" stroke="#000" stroke-width="1.2"/><path d="M15 5l2 1l-2 1z" fill="#e04020"/>
 <circle cx="33" cy="9" r="7.5" fill="#ffb818" stroke="#806010" stroke-width="1.2"/><path d="M30 7v6M33 7v6M36.5 8v5M30 5v1M33 5v1M36 5v1M35 8h2" stroke="#f05000" stroke-width="1.6"/>
 <path d="M49.5 3.5l2-2h12v14h-14z" fill="#ffc820" stroke="#e08000"/><path d="M51 4.5l1.5-1.5h9.5v11h-11z" fill="#ffd840" stroke="#fff" stroke-width="0.8"/><ellipse cx="56" cy="9" rx="2.8" ry="3.8" fill="#fff0a0" stroke="#d07010" stroke-width="2.2"/>
</svg>
<div class="a" style="left:211px;top:776px;width:3px;height:20px;border-left:1px solid #fff;border-right:1px solid #808080"></div>

<div class="a" style="left:218px;top:774px;width:62px;height:22px;box-shadow:inset -1px -1px #404040,inset 1px 1px #fff,inset -2px -2px #808080"></div>
<svg class="a" style="left:222px;top:777px" width="16" height="16"><path d="M0.5 2.5l2-2h13v15h-15z" fill="#ffc820" stroke="#e08000"/><path d="M2 3.5l1.5-1.5h10.5v12h-12z" fill="#ffd840" stroke="#fff" stroke-width="0.8"/><ellipse cx="8" cy="8.5" rx="3" ry="4" fill="#fff0a0" stroke="#d07010" stroke-width="2.2"/></svg>
<div class="a nw" style="left:242px;top:779px;line-height:13px;letter-spacing:0.4px">Inbo...</div>
<div class="a" style="left:284px;top:774px;width:62px;height:22px;box-shadow:inset -1px -1px #404040,inset 1px 1px #fff,inset -2px -2px #808080"></div>
<svg class="a" style="left:288px;top:777px" width="16" height="16"><rect x="1" y="1" width="14" height="14" rx="2" fill="#3060d0"/><path d="M4 5h8v5h-5l-2 2z" fill="none" stroke="#fff" stroke-width="1.5"/></svg>
<div class="a nw" style="left:308px;top:779px;line-height:13px;letter-spacing:0.4px">Offic...</div>
<div class="a" style="left:349px;top:774px;width:62px;height:22px;box-shadow:inset -1px -1px #404040,inset 1px 1px #fff,inset -2px -2px #808080"></div>
<svg class="a" style="left:353px;top:777px" width="16" height="16"><path d="M1 4h5l1 1h7v9h-13z" fill="#f0d060" stroke="#a08020"/><circle cx="9" cy="9" r="3" fill="#c0e0ff" stroke="#406080"/></svg>
<div class="a nw" style="left:373px;top:779px;line-height:13px;letter-spacing:0.4px">dow...</div>
<div class="a" style="left:415px;top:774px;width:62px;height:22px;box-shadow:inset -1px -1px #404040,inset 1px 1px #fff,inset -2px -2px #808080"></div>
<svg class="a" style="left:419px;top:777px" width="16" height="16"><g shape-rendering="crispEdges"><rect x="0.5" y="0.5" width="13" height="13" fill="#fff" stroke="#808080"/><rect x="1" y="1" width="13" height="2" fill="#000080"/><rect x="3" y="5" width="13" height="10" fill="#000"/><rect x="7" y="7" width="6" height="6" fill="#a0a0a0"/><rect x="7" y="8" width="1" height="1" fill="#0f0"/><rect x="10" y="8" width="1" height="1" fill="#0f0"/><rect x="7" y="11" width="1" height="1" fill="#0f0"/><rect x="10" y="11" width="1" height="1" fill="#0f0"/><rect x="4" y="6" width="1" height="2" fill="#0f0"/><rect x="4" y="9" width="1" height="1" fill="#ff0"/><rect x="4" y="11" width="1" height="2" fill="#fff"/><rect x="7" y="6" width="7" height="1" fill="#808080"/><rect x="7" y="13" width="7" height="1" fill="#808080"/></g></svg>
<div class="a nw" style="left:439px;top:779px;line-height:13px;letter-spacing:0.4px">STE...</div>
<div class="a" style="left:481px;top:774px;width:62px;height:22px;box-shadow:inset -1px -1px #404040,inset 1px 1px #fff,inset -2px -2px #808080"></div>
<svg class="a" style="left:485px;top:777px" width="16" height="16"><ellipse cx="8" cy="8.5" rx="8.5" ry="3.2" transform="rotate(-50 8 8.5)" fill="none" stroke="#f0b020" stroke-width="1.3"/><path d="M4.5 9h9q0-5.5-4.5-5.5t-4.5 5.5q0 5 4.5 5q2.5 0 4-1.8" fill="none" stroke="#1c86e0" stroke-width="2.6"/></svg>
<svg class="a" style="left:505px;top:779px" width="13" height="13" shape-rendering="crispEdges"><path d="M0 1.5h12M1.5 4v7M10.5 4v7M1 4.5h10M1 10.5h10M4.5 2v4M7.5 2v5M7.5 7.5h3" stroke="#000" fill="none"/><path d="M4.5 6q0 2-2.5 2.5" stroke="#000" fill="none" shape-rendering="auto"/></svg><div class="a nw" style="left:518px;top:779px;line-height:13px;letter-spacing:0.4px">...</div>
<div class="a" style="left:547px;top:774px;width:62px;height:22px;box-shadow:inset -1px -1px #404040,inset 1px 1px #fff,inset -2px -2px #808080"></div>
<svg class="a" style="left:551px;top:777px" width="16" height="16"><rect x="0" y="0" width="16" height="16" fill="#c0c0c0"/><path d="M1.5 12l9-10q3-2 4.5 1q0 3-2 5l-7 7q-3 1.5-4.5-3z" fill="#000"/><path d="M1 11l4 3M2 9l8-8" stroke="#fff" stroke-width="0.9" fill="none"/><path d="M10.5 8.5h4l-2.5 6.5" stroke="#0ff" stroke-width="2" fill="none"/></svg>
<div class="a nw" style="left:571px;top:779px;line-height:13px;letter-spacing:0.4px">SIM...</div>
<div class="a" style="left:613px;top:774px;width:62px;height:22px;box-shadow:inset -1px -1px #404040,inset 1px 1px #fff,inset -2px -2px #808080"></div>
<svg class="a" style="left:617px;top:777px" width="16" height="16"><ellipse cx="8" cy="8.5" rx="8.5" ry="3.2" transform="rotate(-50 8 8.5)" fill="none" stroke="#f0b020" stroke-width="1.3"/><path d="M4.5 9h9q0-5.5-4.5-5.5t-4.5 5.5q0 5 4.5 5q2.5 0 4-1.8" fill="none" stroke="#1c86e0" stroke-width="2.6"/></svg>
<svg class="a" style="left:637px;top:779px" width="13" height="13" shape-rendering="crispEdges"><path d="M0 1.5h12M1.5 4v7M10.5 4v7M1 4.5h10M1 10.5h10M4.5 2v4M7.5 2v5M7.5 7.5h3" stroke="#000" fill="none"/><path d="M4.5 6q0 2-2.5 2.5" stroke="#000" fill="none" shape-rendering="auto"/></svg><div class="a nw" style="left:650px;top:779px;line-height:13px;letter-spacing:0.4px">...</div>
<div class="a" style="left:679px;top:774px;width:62px;height:22px;box-shadow:inset -1px -1px #404040,inset 1px 1px #fff,inset -2px -2px #808080"></div>
<svg class="a" style="left:683px;top:777px" width="16" height="16"><ellipse cx="8" cy="8.5" rx="8.5" ry="3.2" transform="rotate(-50 8 8.5)" fill="none" stroke="#f0b020" stroke-width="1.3"/><path d="M4.5 9h9q0-5.5-4.5-5.5t-4.5 5.5q0 5 4.5 5q2.5 0 4-1.8" fill="none" stroke="#1c86e0" stroke-width="2.6"/></svg>
<div class="a nw" style="left:703px;top:779px;line-height:13px;letter-spacing:0.4px">STE...</div>
<div class="a" style="left:745px;top:774px;width:62px;height:22px;box-shadow:inset -1px -1px #404040,inset 1px 1px #fff,inset -2px -2px #808080"></div>
<svg class="a" style="left:749px;top:777px" width="16" height="16"><ellipse cx="8" cy="8.5" rx="8.5" ry="3.2" transform="rotate(-50 8 8.5)" fill="none" stroke="#f0b020" stroke-width="1.3"/><path d="M4.5 9h9q0-5.5-4.5-5.5t-4.5 5.5q0 5 4.5 5q2.5 0 4-1.8" fill="none" stroke="#1c86e0" stroke-width="2.6"/></svg>
<div class="a nw" style="left:769px;top:779px;line-height:13px;letter-spacing:0.4px">STL...</div>
<div class="a" style="left:811px;top:774px;width:62px;height:22px;box-shadow:inset 1px 1px #404040,inset -1px -1px #fff,inset 2px 2px #808080;background-color:#fff;background-image:repeating-conic-gradient(#D4D0C8 0 25%,#fff 0 50%);background-size:2px 2px"></div>
<svg class="a" style="left:815px;top:777px" width="16" height="16"><g shape-rendering="crispEdges"><rect x="5" y="0" width="11" height="16" fill="#c0c0c0"/><path d="M0.5 1v14M3.5 2v4M3.5 9v5M6.5 2v4M6.5 9v5M0.5 3.5h10M0.5 11.5h8" stroke="#000"/><path d="M11.5 1.5l2 2l-2 2l-2-2z" fill="#fff" stroke="#000"/><path d="M13 3.5h3" stroke="#000"/><path d="M7 7l2-1l1 1l-1 2z" fill="#000"/></g><path d="M9 10l2-2l5 5l-2 2z" fill="#ff0" stroke="#a00000" stroke-width="0.8"/><path d="M10 11l2-2M12 13l2-2" stroke="#000" stroke-width="0.9"/></svg>
<div class="a nw" style="left:835px;top:779px;line-height:13px;letter-spacing:0.4px">LAD/...</div>

<div class="a" style="left:884px;top:776px;width:3px;height:20px;border-left:1px solid #fff;border-right:1px solid #808080"></div>
<svg class="a" style="left:894px;top:778px" width="12" height="16"><rect x="0" y="0" width="12" height="16" fill="#0A246A"/><text x="0" y="12" font-family="Liberation Sans" font-size="10.5" fill="#fff" textLength="12" lengthAdjust="spacingAndGlyphs">CH</text></svg>
<div class="a thinsunk" style="left:910px;top:774px;width:368px;height:24px"></div>
<svg class="a" style="left:910px;top:777px" width="330" height="18" shape-rendering="auto">
<g transform="translate(3 1)"><defs><linearGradient id="lg0" x1="0" y1="0" x2="1" y2="0"><stop offset="0" stop-color="#202850"/><stop offset="1" stop-color="#5070b0"/></linearGradient></defs><rect x="0" y="0" width="16" height="16" fill="url(#lg0)"/><text x="0" y="8" font-family="Liberation Sans" font-size="8.5" font-weight="bold" fill="#fff" textLength="16" lengthAdjust="spacingAndGlyphs">LICE</text><text x="3" y="15.5" font-family="Liberation Sans" font-size="8.5" font-weight="bold" fill="#a8b8f0" textLength="13" lengthAdjust="spacingAndGlyphs">MA</text></g>
<g transform="translate(21 1)"><rect x="6" y="1" width="8" height="7" fill="#404078" stroke="#8888c8"/><rect x="1" y="5" width="8" height="7" fill="#404078" stroke="#8888c8"/><ellipse cx="4.5" cy="14" rx="4" ry="1.8" fill="#b0b0e0"/><ellipse cx="11" cy="10" rx="3" ry="1.5" fill="#b0b0e0"/></g>
<g transform="translate(39 1)"><rect x="9" y="1" width="6" height="7" fill="#808080" stroke="#000"/><rect x="1.5" y="6.5" width="8" height="7" fill="#fff" stroke="#000"/><rect x="3" y="8" width="5" height="4" fill="#0090d0"/><path d="M4 11l3-3" stroke="#fff"/><rect x="0" y="14" width="10" height="2" fill="#000"/></g>
<g transform="translate(57 1)"><path d="M1 3l4-2v12l-4 2z" fill="#e0d040" stroke="#808000"/><path d="M5 1h4v12h-4z" fill="#f0e060"/><path d="M2 14l6-3l8 1l-6 3z" fill="#d02020"/><circle cx="8" cy="6" r="3.2" fill="#a0e0ff" stroke="#2060c0" stroke-width="1.3"/><path d="M10 8l5 5" stroke="#2040c0" stroke-width="2"/></g>
<g transform="translate(75 1)"><circle cx="8" cy="8" r="5.8" fill="none" stroke="#10b010" stroke-width="3"/><rect x="3" y="7" width="10" height="2.5" fill="#000"/><path d="M6 1l4 2l-4 2z M10 15l-4-2l4-2z" fill="#10b010"/></g>
<g transform="translate(93 1)"><rect x="1.5" y="0.5" width="14" height="15" rx="1" fill="#ffc830" stroke="#e08000"/><rect x="3" y="2" width="11" height="12" fill="#ffe070"/><ellipse cx="8" cy="8" rx="3.3" ry="4" fill="none" stroke="#c86000" stroke-width="2.2"/></g>
<g transform="translate(111 1)"><rect x="1" y="3" width="8" height="7" fill="#303060" stroke="#8080c0"/><ellipse cx="5" cy="13" rx="4" ry="2" fill="#b0b0e0" stroke="#6060a0"/><path d="M11 3q2 3 0 6M13 1q3 5 0 10" stroke="#404040" fill="none"/></g>
<g transform="translate(129 1)"><rect x="6" y="1" width="7" height="6" fill="#404078" stroke="#8888c8"/><rect x="1" y="5" width="7" height="6" fill="#404078" stroke="#8888c8"/><ellipse cx="4" cy="14" rx="3.5" ry="1.5" fill="#b0b0e0"/><path d="M9 9l6 6M15 9l-6 6" stroke="#e02020" stroke-width="2"/></g>
<g transform="translate(147 1)"><path d="M5 0h6l5 5v6l-5 5h-6l-5-5v-6z" fill="#0000e0" stroke="#000040" stroke-width="0.6"/><path d="M0 9h3q1-5 2 0q1 5 2 0q1-6 2 0q1 5 2 0h5" stroke="#ffff00" fill="none" stroke-width="1"/></g>
<g transform="translate(165 1)"><ellipse cx="7" cy="8" rx="6" ry="7.8" fill="#0030d0" stroke="#001080" stroke-width="0.6"/><path d="M4 5l6 6l-3 3v-12l3 3l-6 6" stroke="#fff" fill="none" stroke-width="1.4"/></g>
<g transform="translate(183 1)"><rect x="3.5" y="1.5" width="10" height="8" fill="#e8e8e0" stroke="#000"/><rect x="5" y="3" width="7" height="5" fill="#008080"/><rect x="7" y="4" width="3" height="2" fill="#fff"/><rect x="1.5" y="10.5" width="14" height="4" fill="#e0e0d8" stroke="#000"/><rect x="3" y="12" width="1" height="1" fill="#00c000"/><path d="M7 12.5h6" stroke="#000"/><path d="M0 15.5h16" stroke="#000"/></g>
<g transform="translate(201 1)"><path d="M1 1l4 4M5 1l-4 4" stroke="#000" stroke-width="1.5"/><path d="M2 15q6-4 14-13q-3 6-4 13q-4-3-10 0z" fill="#506890"/></g>
<g transform="translate(219 1)"><rect x="1.5" y="0.5" width="5" height="6" fill="#0000c0" stroke="#000"/><rect x="9.5" y="0.5" width="5" height="5" fill="#800080" stroke="#000"/><path d="M1 7.5h14" stroke="#000"/><rect x="1.5" y="9.5" width="5" height="5" fill="#0000c0" stroke="#000"/><path d="M11 6l5 10h-10z" fill="#ffff00" stroke="#000" stroke-width="0.8"/></g>
<g transform="translate(237 1)"><path d="M2 14l9-9" stroke="#000" stroke-width="2"/><path d="M7 3q4-3 8 2l-2 2q-2-3-5-2z" fill="#000"/></g>
<g transform="translate(255 1)"><circle cx="6" cy="7" r="5.5" fill="#909090" stroke="#505050"/><circle cx="5" cy="6" r="2.5" fill="#c0c0c0"/><circle cx="10.5" cy="11" r="4" fill="#e03030" stroke="#fff" stroke-width="0.8"/><path d="M8 11h5" stroke="#fff" stroke-width="1.5"/></g>
<g transform="translate(273 1)"><path d="M1 4l5-3l2 3h-3v4z" fill="#30b030"/><path d="M3 10l9-4l4 5l-9 4z" fill="#8080a0" stroke="#404060"/><path d="M6 11l5-2" stroke="#d0d0ff"/></g>
<g transform="translate(291 1)"><rect x="1.5" y="2.5" width="8" height="12" fill="#6070c0" stroke="#4050a0"/><path d="M2 7l3 3l8-8" stroke="#10d010" stroke-width="2.2" fill="none"/><path d="M7 9l7 7M14 9l-7 7" stroke="#e02020" stroke-width="2"/></g>
<g transform="translate(309 1)"><rect x="0" y="1" width="16" height="14" rx="1" fill="#d00030"/><path d="M4 13q-2-7 6-11M12 3q2 7-5 11" stroke="#fff" stroke-width="1.3" fill="none"/></g>
</svg>
<div class="a nw" style="left:1242px;top:780px;line-height:13px;letter-spacing:0.3px">11:32</div>


</body></html>
